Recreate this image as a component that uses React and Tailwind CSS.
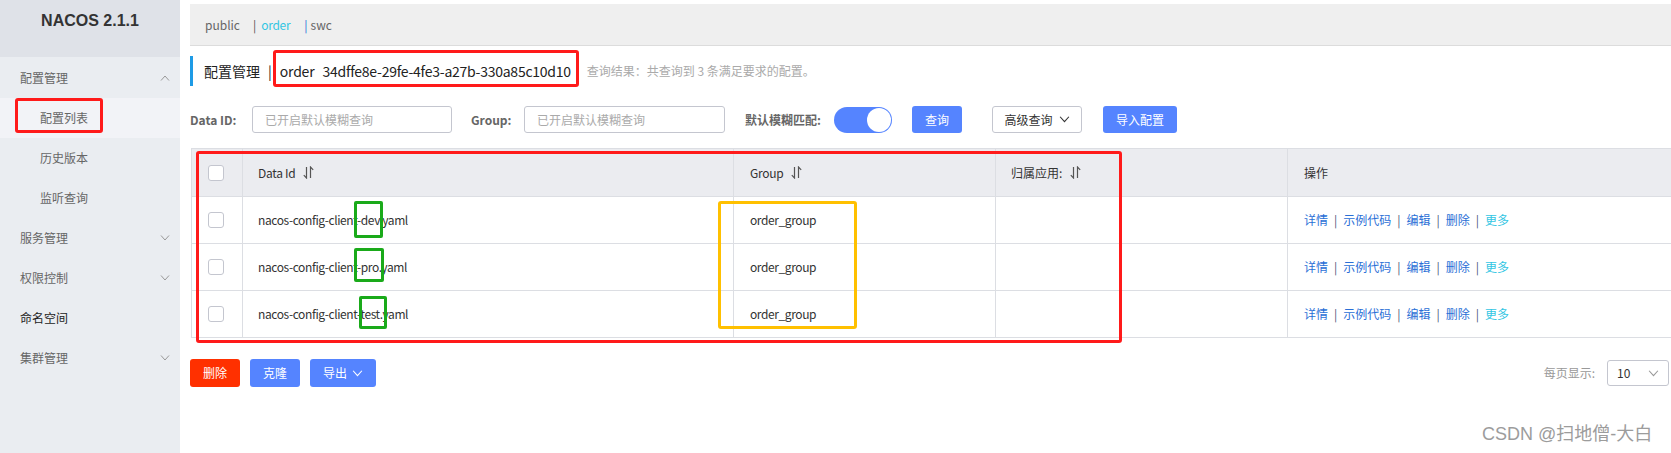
import React from "react";

const font = "font-['Noto_Sans_CJK_SC','Noto_Sans',sans-serif]";

const Chevron = ({ up = false, className = "" }) => (
  <svg width="10" height="6" viewBox="0 0 10 6" className={className}>
    <path
      d={up ? "M1 5.5 L5 1 L9 5.5" : "M1 0.5 L5 5 L9 0.5"}
      fill="none"
      stroke="currentColor"
      strokeWidth="1"
    />
  </svg>
);

const SortIcon = () => (
  <svg width="11" height="13" viewBox="0 0 11 13" className="ml-[8px] text-[#555]">
    <path d="M3.5 1 V12 L0.8 9.2" fill="none" stroke="currentColor" strokeWidth="1.2" />
    <path d="M7.5 12 V1 L10.2 3.8" fill="none" stroke="currentColor" strokeWidth="1.2" />
  </svg>
);

const Checkbox = () => (
  <div className="w-[16px] h-[16px] bg-white border border-[#c4c6cf] rounded-[3px]" />
);

const menu = [
  { label: "配置管理", level: 0, arrow: "up" },
  { label: "配置列表", level: 1, active: true },
  { label: "历史版本", level: 1 },
  { label: "监听查询", level: 1 },
  { label: "服务管理", level: 0, arrow: "down" },
  { label: "权限控制", level: 0, arrow: "down" },
  { label: "命名空间", level: 0, dark: true },
  { label: "集群管理", level: 0, arrow: "down" },
];

const rows = [
  "nacos-config-client-dev.yaml",
  "nacos-config-client-pro.yaml",
  "nacos-config-client-test.yaml",
];

const Sidebar = () => (
  <div className="w-[180px] shrink-0 bg-[#eaedf1] flex flex-col">
    <div className="h-[57px] bg-[#dfe2e8] flex justify-center pt-[11px]">
      <span className="text-[16px] leading-[20px] font-bold text-[#333] font-['Liberation_Sans',sans-serif]">
        NACOS 2.1.1
      </span>
    </div>
    <div className="mt-[1px] flex flex-col">
      {menu.map((m) => (
        <div
          key={m.label}
          className={`h-[40px] flex items-center justify-between pr-[10px] text-[12px] ${
            m.level ? "pl-[40px]" : "pl-[20px]"
          } ${m.active ? "bg-[#f2f3f7]" : ""} ${m.dark ? "text-[#222]" : "text-[#666]"}`}
        >
          <span>{m.label}</span>
          {m.arrow && <Chevron up={m.arrow === "up"} className="text-[#999]" />}
        </div>
      ))}
    </div>
  </div>
);

const Input = ({ w }) => (
  <div
    className={`${w} h-[27px] border border-[#c4c6cf] rounded-[3px] bg-white flex items-center pl-[12px] text-[12px] text-[#aaa]`}
  >
    已开启默认模糊查询
  </div>
);

const Table = () => (
  <div className="border-t border-l border-[#dcdee3] text-[12px] text-[#333]">
    <div className="flex h-[48px] bg-[#ebecf0] border-b border-[#dcdee3]">
      <div className="w-[51px] flex items-center justify-center border-r border-[#dcdee3] pr-[2px]">
        <Checkbox />
      </div>
      <div className="w-[491px] flex items-center pl-[15px] border-r border-[#dcdee3] tracking-[-0.3px]">
        Data Id <SortIcon />
      </div>
      <div className="w-[262px] flex items-center pl-[16px] border-r border-[#dcdee3] tracking-[-0.3px]">
        Group <SortIcon />
      </div>
      <div className="w-[292px] flex items-center pl-[15px] border-r border-[#dcdee3]">
        归属应用: <SortIcon />
      </div>
      <div className="flex-1 flex items-center pl-[16px]">操作</div>
    </div>
    {rows.map((r) => (
      <div key={r} className="flex h-[47px] bg-white border-b border-[#dcdee3]">
        <div className="w-[51px] flex items-center justify-center border-r border-[#dcdee3] pr-[2px]">
          <Checkbox />
        </div>
        <div className="w-[491px] flex items-center pl-[15px] border-r border-[#dcdee3] tracking-[-0.4px]">
          {r}
        </div>
        <div className="w-[262px] flex items-center pl-[16px] border-r border-[#dcdee3] tracking-[-0.4px]">
          order_group
        </div>
        <div className="w-[292px] border-r border-[#dcdee3]" />
        <div className="flex-1 flex items-center pl-[16px] text-[#2a6fd6] gap-[6px]">
          <span>详情</span>
          <span className="text-[#4a5a7a]">|</span>
          <span>示例代码</span>
          <span className="text-[#4a5a7a]">|</span>
          <span>编辑</span>
          <span className="text-[#4a5a7a]">|</span>
          <span>删除</span>
          <span className="text-[#4a5a7a]">|</span>
          <span className="text-[#33c6e3]">更多</span>
        </div>
      </div>
    ))}
  </div>
);

export default function App() {
  return (
    <div className={`relative w-[1671px] h-[453px] overflow-hidden bg-white flex ${font}`}>
      <Sidebar />
      <div className="flex-1 flex flex-col pl-[10px] pt-[4px]">
        <div className="h-[42px] bg-[#efefef] border-b border-[#dcdcdc] flex items-center pl-[15px] text-[12px] text-[#666]">
          <span>public</span>
          <span className="ml-[13px] text-[#555]">|</span>
          <span className="ml-[5px] text-[#33c6e3] tracking-[-0.3px]">order</span>
          <span className="ml-[14px] text-[#2a6fd6]">|</span>
          <span className="ml-[3px]">swc</span>
        </div>

        <div className="mt-[10px] h-[30px] flex items-center border-l-[3px] border-[#1e9be6] pl-[11px]">
          <span className="text-[14px] text-[#222]">配置管理</span>
          <span className="text-[14px] text-[#222] ml-[8px]">|</span>
          <span className="text-[14px] text-[#222] ml-[8px] tracking-[-0.2px]">order</span>
          <span className="text-[14px] text-[#222] ml-[8px] tracking-[-0.25px]">
            34dffe8e-29fe-4fe3-a27b-330a85c10d10
          </span>
          <span className="text-[12px] text-[#aaa] ml-[16px]">查询结果：共查询到 3 条满足要求的配置。</span>
        </div>

        <div className="mt-[20px] h-[27px] flex items-center text-[12px]">
          <span className="font-bold text-[#666] w-[62px]">Data ID:</span>
          <Input w="w-[200px]" />
          <span className="font-bold text-[#666] ml-[19px] w-[53px]">Group:</span>
          <Input w="w-[201px]" />
          <span className="font-bold text-[#666] ml-[20px] w-[89px]">默认模糊匹配:</span>
          <div className="w-[58px] h-[26px] rounded-full bg-[#5584ff] flex items-center justify-end pr-[1px]">
            <div className="w-[24px] h-[24px] rounded-full bg-white" />
          </div>
          <div className="ml-[20px] w-[50px] h-[27px] rounded-[3px] bg-[#5584ff] text-white flex items-center justify-center">
            查询
          </div>
          <div className="ml-[30px] w-[90px] h-[27px] rounded-[3px] bg-white border border-[#c4c6cf] text-[#333] flex items-center justify-center gap-[6px]">
            高级查询 <Chevron className="text-[#333] w-[11px] h-[7px]" />
          </div>
          <div className="ml-[21px] w-[74px] h-[27px] rounded-[3px] bg-[#5584ff] text-white flex items-center justify-center">
            导入配置
          </div>
        </div>

        <div className="mt-[15px] ml-[1px]">
          <Table />
        </div>

        <div className="mt-[21px] flex items-center text-[12px]">
          <div className="w-[50px] h-[28px] rounded-[3px] bg-[#ff3000] text-white flex items-center justify-center">
            删除
          </div>
          <div className="ml-[10px] w-[50px] h-[28px] rounded-[3px] bg-[#5584ff] text-white flex items-center justify-center">
            克隆
          </div>
          <div className="ml-[10px] w-[66px] h-[28px] rounded-[3px] bg-[#5584ff] text-white flex items-center justify-center gap-[5px]">
            导出 <Chevron className="text-white w-[11px] h-[7px]" />
          </div>
          <div className="ml-auto flex items-center">
            <span className="text-[#999]">每页显示:</span>
            <div className="ml-[12px] mr-[2px] w-[62px] h-[26px] border border-[#c4c6cf] rounded-[3px] flex items-center justify-between pl-[9px] pr-[9px] text-[#333]">
              <span>10</span>
              <Chevron className="text-[#999] w-[11px] h-[7px]" />
            </div>
          </div>
        </div>
      </div>

      {/* annotation boxes */}
      <div className="absolute left-[15px] top-[98px] w-[88px] h-[35px] border-[3px] border-[#ff1a1a] rounded-[3px]" />
      <div className="absolute left-[273px] top-[50px] w-[306px] h-[37px] border-[3px] border-[#ff1a1a] rounded-[3px]" />
      <div className="absolute left-[196px] top-[151px] w-[926px] h-[192px] border-[3px] border-[#ff1a1a] rounded-[3px]" />
      <div className="absolute left-[354px] top-[201px] w-[29px] h-[37px] border-[3px] border-[#1aaa1a] rounded-[2px]" />
      <div className="absolute left-[354px] top-[248px] w-[30px] h-[34px] border-[3px] border-[#1aaa1a] rounded-[2px]" />
      <div className="absolute left-[359px] top-[296px] w-[28px] h-[33px] border-[3px] border-[#1aaa1a] rounded-[2px]" />
      <div className="absolute left-[718px] top-[201px] w-[139px] h-[128px] border-[3px] border-[#ffc000] rounded-[3px]" />

      <div className="absolute left-[1482px] top-[423px] text-[18px] leading-[22px] text-[#9c9c9c] font-['Liberation_Sans','Noto_Sans_CJK_SC',sans-serif]">
        CSDN @扫地僧-大白
      </div>
    </div>
  );
}
